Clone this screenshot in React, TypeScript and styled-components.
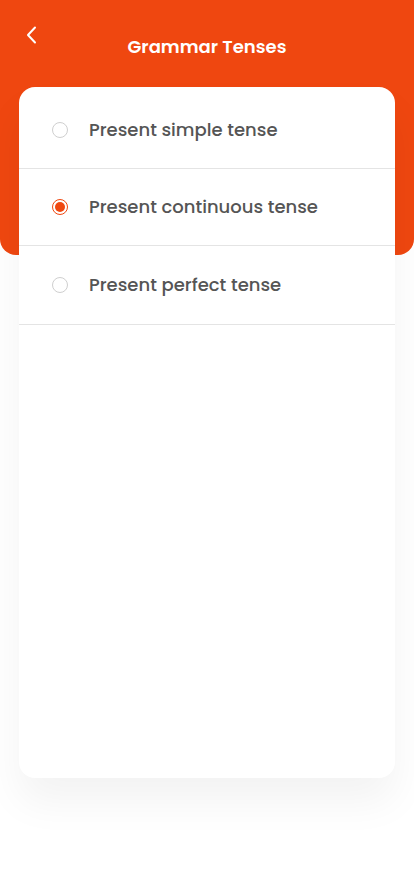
import React, { useState } from "react";
import styled, { createGlobalStyle } from "styled-components";

const Global = createGlobalStyle`
  html, body { margin: 0; padding: 0; background: #ffffff; }
  body { font-family: "Poppins", "Inter", "Noto Sans", sans-serif; }
  * { box-sizing: border-box; }
`;

const Screen = styled.div`
  width: 414px;
  min-height: 896px;
  background: #ffffff;
  display: flex;
  flex-direction: column;
`;

const Header = styled.header`
  height: 255px;
  background: #ef4710;
  border-radius: 0 0 16px 16px;
  display: grid;
  grid-template-columns: 52px 1fr 52px;
  align-items: start;
  padding-top: 26px;
`;

const BackButton = styled.button`
  border: none;
  background: transparent;
  padding: 0 0 0 26px;
  height: 18px;
  display: flex;
  align-items: center;
  color: #fff;
  cursor: pointer;
`;

const Title = styled.h1`
  margin: 10px 0 0;
  text-align: center;
  color: #fff;
  font-size: 18px;
  font-weight: 600;
  line-height: 22px;
`;

const Card = styled.div`
  margin: -168px 19px 0;
  height: 691px;
  background: #fff;
  border-radius: 16px;
  padding-top: 5px;
  box-shadow: 0 24px 40px rgba(0, 0, 0, 0.05);
  display: flex;
  flex-direction: column;
`;

const Row = styled.label`
  height: 77px;
  border-bottom: 1px solid #e4e4e4;
  display: flex;
  align-items: center;
  gap: 21px;
  padding-left: 33px;
  cursor: pointer;
  &:last-child {
    height: 79px;
  }
`;

const Radio = styled.span<{ $on: boolean }>`
  width: 16px;
  height: 16px;
  border-radius: 50%;
  border: 1.3px solid ${(p) => (p.$on ? "#ef4710" : "#cfcfcf")};
  display: flex;
  align-items: center;
  justify-content: center;
  flex-shrink: 0;
  &::after {
    content: "";
    width: 10px;
    height: 10px;
    border-radius: 50%;
    background: ${(p) => (p.$on ? "#ef4710" : "transparent")};
  }
`;

const Label = styled.span`
  font-size: 18px;
  font-weight: 500;
  color: #555555;
  line-height: 24px;
`;

const items = [
  "Present simple tense",
  "Present continuous tense",
  "Present perfect tense",
];

export default function App() {
  const [sel, setSel] = useState(1);
  return (
    <Screen>
      <Global />
      <Header>
        <BackButton aria-label="Back">
          <svg width="11" height="18" viewBox="0 0 11 18" fill="none">
            <path d="M9 1.5L2 9l7 7.5" stroke="#fff" strokeWidth="2" strokeLinecap="round" strokeLinejoin="round" />
          </svg>
        </BackButton>
        <Title>Grammar Tenses</Title>
        <span />
      </Header>
      <Card>
        {items.map((t, i) => (
          <Row key={t} onClick={() => setSel(i)}>
            <Radio $on={sel === i} />
            <Label>{t}</Label>
          </Row>
        ))}
      </Card>
    </Screen>
  );
}
